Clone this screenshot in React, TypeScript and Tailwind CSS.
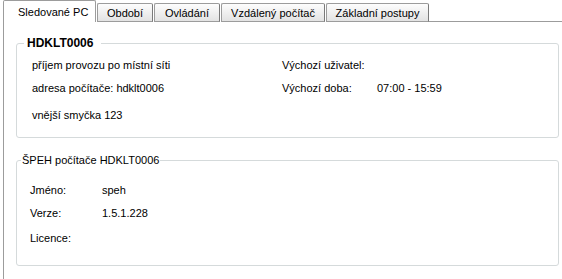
import React from 'react';

const tabs = [
  { label: 'Sledované PC', w: 'w-[93px]' },
  { label: 'Období', w: 'w-[56px]' },
  { label: 'Ovládání', w: 'w-[66px]' },
  { label: 'Vzdálený počítač', w: 'w-[104px]' },
  { label: 'Základní postupy', w: 'w-[103px]' },
];

const App: React.FC = () => {
  return (
    <div className="w-[562px] h-[279px] bg-white overflow-hidden flex flex-col text-[11px] leading-[14px] text-black font-['Liberation_Sans',Arial,sans-serif]">
      {/* tab strip */}
      <div className="flex items-end h-[22px] pl-[3px] shrink-0">
        {tabs.map((t, i) =>
          i === 0 ? (
            <div
              key={t.label}
              className={`${t.w} h-[22px] bg-white border border-b-0 border-[#9c9c9c] rounded-t-[2px] pl-[14px] pt-[4px]`}
            >
              {t.label}
            </div>
          ) : (
            <div
              key={t.label}
              className={`${t.w} h-[19px] ml-px bg-gradient-to-b from-[#fdfdfd] to-[#e3e3e3] border border-[#9c9c9c] border-r-[#7a7a7a] rounded-t-[2px] flex items-center justify-center pt-px`}
            >
              {t.label}
            </div>
          )
        )}
        <div className="flex-1 h-[19px] border-b border-[#9c9c9c]" />
      </div>

      {/* panel */}
      <div className="flex-1 ml-[3px] border-l border-[#9c9c9c] pl-[12px] pr-[3px]">
        <fieldset className="mt-[14px] border border-[#d5dadb] rounded-[3px] px-0">
          <legend className="ml-[7px] pl-[3px] pr-[8px] font-bold text-[12px] leading-[14px]">HDKLT0006</legend>
          <div className="pl-[15px] pt-[8px] pb-[15px] flex flex-col">
            <div className="flex">
              <div className="w-[250px]">příjem provozu po místní síti</div>
              <div>Výchozí uživatel:</div>
            </div>
            <div className="flex mt-[9px]">
              <div className="w-[250px]">adresa počítače: hdklt0006</div>
              <div className="w-[95px]">Výchozí doba:</div>
              <div>07:00 - 15:59</div>
            </div>
            <div className="flex mt-[13px]">
              <div className="w-[250px]">vnější smyčka 123</div>
            </div>
          </div>
        </fieldset>

        <fieldset className="mt-[15px] border border-[#d5dadb] rounded-[3px] px-0">
          <legend className="ml-[4px] px-[1px] leading-[14px]">ŠPEH počítače HDKLT0006</legend>
          <div className="pl-[13px] pt-[16px] pb-[20px] flex flex-col">
            <div className="flex">
              <div className="w-[72px]">Jméno:</div>
              <div>speh</div>
            </div>
            <div className="flex mt-[9px]">
              <div className="w-[72px]">Verze:</div>
              <div>1.5.1.228</div>
            </div>
            <div className="flex mt-[11px]">
              <div className="w-[72px]">Licence:</div>
            </div>
          </div>
        </fieldset>
      </div>
    </div>
  );
};

export default App;
